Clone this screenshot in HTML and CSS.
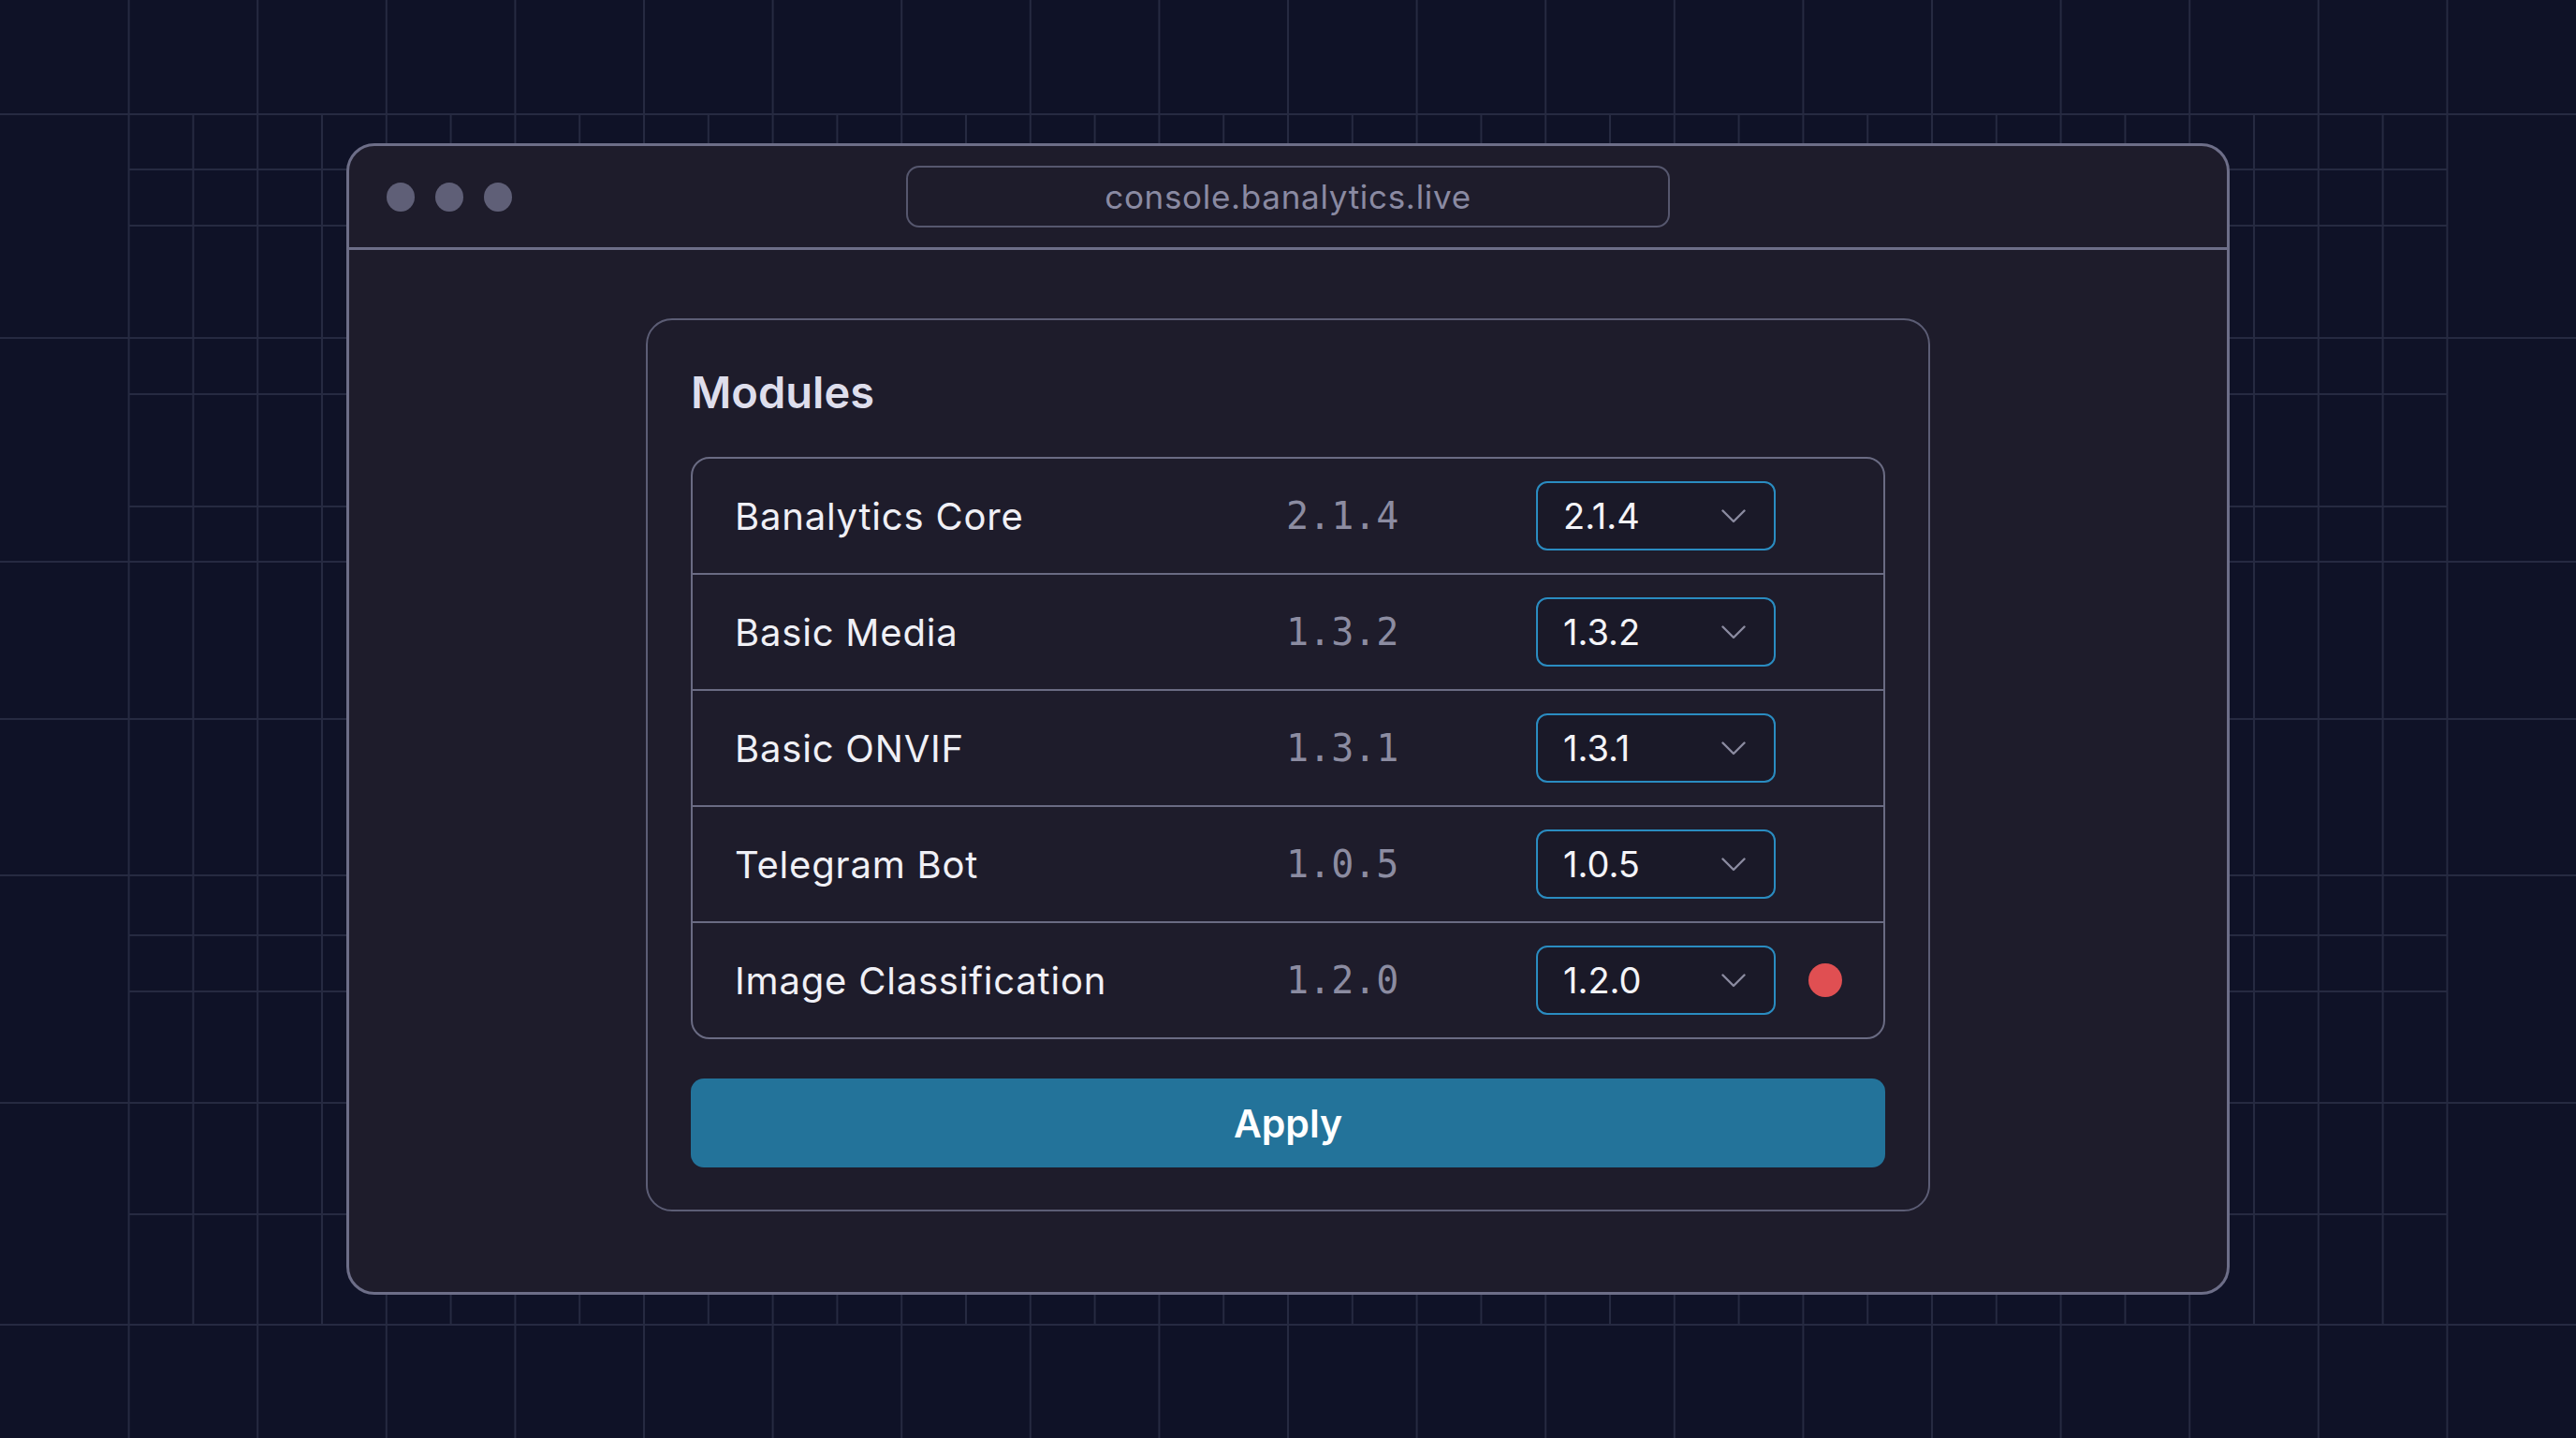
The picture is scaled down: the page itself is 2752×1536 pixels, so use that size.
FILE: index.html
```html
<!DOCTYPE html>
<html lang="en">
<head>
<meta charset="utf-8">
<title>Modules</title>
<link rel="stylesheet" href="styles.css">
</head>
<body>
<svg class="grid-bg" width="2752" height="1536" viewBox="0 0 2752 1536" aria-hidden="true">
  <g stroke="#262a41" stroke-width="2" fill="none">
    <path d="M137.6 0V1536M275.2 0V1536M412.8 0V1536M550.4 0V1536M688 0V1536M825.6 0V1536M963.2 0V1536M1100.8 0V1536M1238.4 0V1536M1376 0V1536M1513.6 0V1536M1651.2 0V1536M1788.8 0V1536M1926.4 0V1536M2064 0V1536M2201.6 0V1536M2339.2 0V1536M2476.8 0V1536M2614.4 0V1536"/>
    <path d="M206.4 122V1415M344 122V1415M481.6 122V1415M619.2 122V1415M756.8 122V1415M894.4 122V1415M1032 122V1415M1169.6 122V1415M1307.2 122V1415M1444.8 122V1415M1582.4 122V1415M1720 122V1415M1857.6 122V1415M1995.2 122V1415M2132.8 122V1415M2270.4 122V1415M2408 122V1415M2545.6 122V1415"/>
    <path d="M0 122H2752M0 361H2752M0 600H2752M0 768H2752M0 935H2752M0 1178H2752M0 1415H2752"/>
    <path d="M137.6 181H2614.4M137.6 241H2614.4M137.6 421H2614.4M137.6 541H2614.4M137.6 999H2614.4M137.6 1059H2614.4M137.6 1297H2614.4"/>
  </g>
</svg>

<div class="window">
  <div class="titlebar">
    <div class="dots">
      <span class="dot"></span><span class="dot"></span><span class="dot"></span>
    </div>
    <div class="url">console.banalytics.live</div>
    <div class="spacer"></div>
  </div>
  <div class="content">
    <section class="card">
      <h1 class="card-title">Modules</h1>
      <div class="table">
        <div class="row">
          <span class="name">Banalytics Core</span>
          <span class="version">2.1.4</span>
          <div class="select"><span>2.1.4</span><svg class="chev" width="26" height="15" viewBox="0 0 26 15"><polyline points="1.5,1.5 13,13 24.5,1.5"/></svg></div>
          <span class="status"></span>
        </div>
        <div class="row">
          <span class="name">Basic Media</span>
          <span class="version">1.3.2</span>
          <div class="select"><span>1.3.2</span><svg class="chev" width="26" height="15" viewBox="0 0 26 15"><polyline points="1.5,1.5 13,13 24.5,1.5"/></svg></div>
          <span class="status"></span>
        </div>
        <div class="row">
          <span class="name">Basic ONVIF</span>
          <span class="version">1.3.1</span>
          <div class="select"><span>1.3.1</span><svg class="chev" width="26" height="15" viewBox="0 0 26 15"><polyline points="1.5,1.5 13,13 24.5,1.5"/></svg></div>
          <span class="status"></span>
        </div>
        <div class="row">
          <span class="name">Telegram Bot</span>
          <span class="version">1.0.5</span>
          <div class="select"><span>1.0.5</span><svg class="chev" width="26" height="15" viewBox="0 0 26 15"><polyline points="1.5,1.5 13,13 24.5,1.5"/></svg></div>
          <span class="status"></span>
        </div>
        <div class="row">
          <span class="name">Image Classification</span>
          <span class="version">1.2.0</span>
          <div class="select"><span>1.2.0</span><svg class="chev" width="26" height="15" viewBox="0 0 26 15"><polyline points="1.5,1.5 13,13 24.5,1.5"/></svg></div>
          <span class="status status-error"></span>
        </div>
      </div>
      <button class="apply" type="button">Apply</button>
    </section>
  </div>
</div>
</body>
</html>
```

FILE: styles.css
```css
* { box-sizing: border-box; }

html, body {
  margin: 0;
  padding: 0;
}

body {
  width: 2752px;
  height: 1536px;
  overflow: hidden;
  background: #0f1227;
  font-family: Inter, "Noto Sans", "Liberation Sans", sans-serif;
  display: flex;
  align-items: center;
  justify-content: center;
  position: relative;
}

.grid-bg {
  position: absolute;
  left: 0;
  top: 0;
  z-index: 0;
}

.window {
  position: relative;
  z-index: 1;
  width: 2012px;
  height: 1230px;
  background: #1e1c2b;
  border: 3px solid #6d6e88;
  border-radius: 30px;
  display: flex;
  flex-direction: column;
  overflow: hidden;
}

.titlebar {
  height: 111px;
  flex: none;
  border-bottom: 3px solid #6d6e88;
  display: grid;
  grid-template-columns: 1fr 816px 1fr;
  align-items: center;
  padding: 0 40px;
}

.dots {
  display: flex;
  gap: 22px;
}

.dot {
  width: 30px;
  height: 31px;
  border-radius: 50%;
  background: #5f5f77;
}

.url {
  height: 66px;
  border: 2px solid #56576e;
  border-radius: 14px;
  display: flex;
  align-items: center;
  justify-content: center;
  color: #8a8aa2;
  font-size: 35px;
  letter-spacing: 0.7px;
}

.content {
  flex: 1;
  display: flex;
  justify-content: center;
  align-items: flex-start;
  padding-top: 73px;
}

.card {
  width: 1372px;
  border: 2px solid #5c5d75;
  border-radius: 28px;
  padding: 46px 46px 45px;
  display: flex;
  flex-direction: column;
}

.card-title {
  margin: 2px 0 0;
  font-size: 47px;
  font-weight: 600;
  line-height: 58px;
  color: #dedeec;
}

.table {
  margin-top: 40px;
  border: 2px solid #6a6b83;
  border-radius: 20px;
  display: flex;
  flex-direction: column;
}

.row {
  height: 124px;
  display: grid;
  grid-template-columns: 589px 267px 256px auto;
  align-items: center;
  padding-left: 45px;
  border-bottom: 2px solid #6a6b83;
}

.row:last-child {
  height: 122px;
  border-bottom: none;
}

.name {
  font-size: 40px;
  color: #f0f0f6;
  letter-spacing: 0.8px;
}

.version {
  font-family: "DejaVu Sans Mono", "Liberation Mono", monospace;
  font-size: 40px;
  color: #8c8ca1;
}

.select {
  height: 74px;
  border: 2px solid #2a8cc1;
  border-radius: 12px;
  background: #1a1928;
  display: flex;
  align-items: center;
  justify-content: space-between;
  padding: 0 30px 0 27px;
  color: #f4f4f8;
  font-size: 38px;
}

.chev {
  display: block;
}

.chev polyline {
  fill: none;
  stroke: #8b8ba0;
  stroke-width: 2.4;
  stroke-linecap: round;
  stroke-linejoin: round;
}

.status {
  width: 36px;
  height: 36px;
  margin-left: 35px;
  border-radius: 50%;
}

.status-error {
  background: #e04f52;
}

.apply {
  margin-top: 42px;
  height: 95px;
  border: none;
  border-radius: 14px;
  background: #23739a;
  color: #ffffff;
  font-family: Inter, "Noto Sans", "Liberation Sans", sans-serif;
  font-size: 41px;
  font-weight: 600;
  cursor: pointer;
}
```
